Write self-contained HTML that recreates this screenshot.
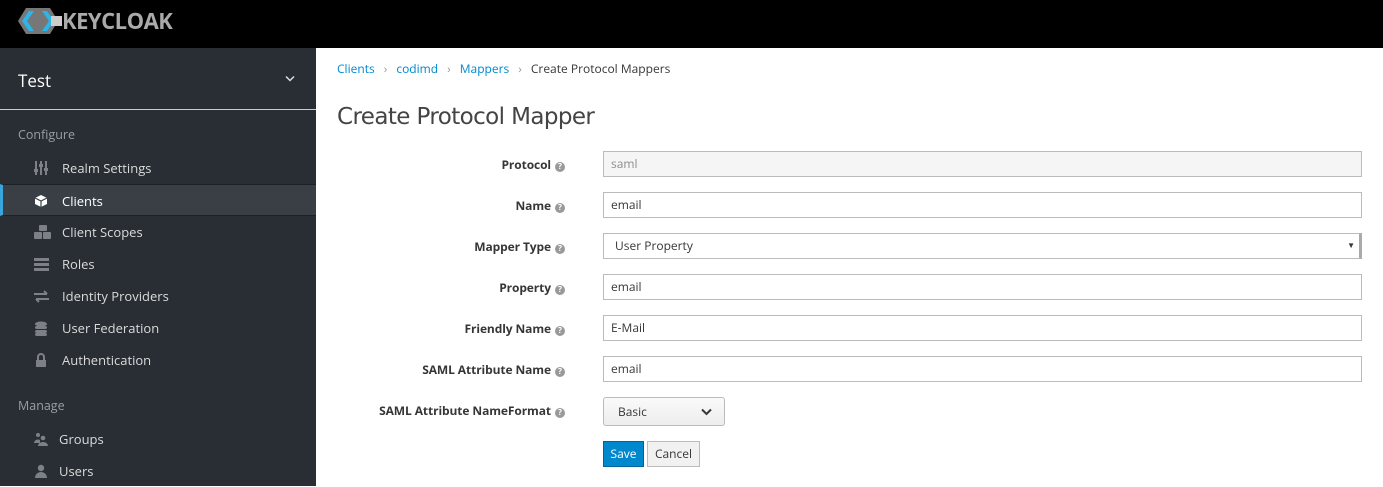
<!DOCTYPE html>
<html><head><style>
*{box-sizing:border-box;margin:0;padding:0}
body{width:1383px;height:486px;overflow:hidden;font-family:"Open Sans","Liberation Sans",sans-serif;font-size:12px;background:#fff;position:relative}
.top{position:absolute;left:0;top:0;width:1383px;height:48px;background:#000}
.logo{position:absolute;left:18px;top:6px;color:#aaa;font-weight:bold;font-size:22px;letter-spacing:-0.5px}
.side{position:absolute;left:0;top:48px;width:316px;height:438px;background:#292e34}
.realm{position:absolute;left:18px;top:21px;color:#fff;font-size:17px}
.chev{position:absolute;left:285px;top:27px}
.sep{position:absolute;left:0;top:61px;width:316px;height:1px;background:#ccc}
.sec{position:absolute;left:18px;color:#9a9da0;font-size:12.5px}
.item{position:absolute;left:0;width:316px;height:32px;color:#dadada;font-size:13px;line-height:32px;padding-left:62px}
.item.act{background:#393f44;border-left:3px solid #39a5dc;padding-left:59px;color:#fff;border-top:1px solid #1d2125;border-bottom:1px solid #1d2125}
.item svg{position:absolute;left:34px;top:9px}
.act svg{left:31px}
.bc{position:absolute;left:337px;top:60px;font-size:12px;color:#363636}
.bc a{color:#0088ce;text-decoration:none}
.bc span.s{color:#999;margin:0 9px}
h1{position:absolute;left:337px;top:104px;font-weight:normal;font-size:23px;color:#444;font-family:"DejaVu Sans","Liberation Sans",sans-serif;letter-spacing:-0.6px}
.lbl{position:absolute;right:818px;font-weight:bold;color:#363636;font-size:12px;white-space:nowrap;letter-spacing:-0.1px}
.lbl i{display:inline-block;width:10px;height:10px;border-radius:50%;background:#999;margin-left:4px;vertical-align:0px;font-style:normal;color:#fff;font-size:8px;line-height:10px;text-align:center}
.inp{position:absolute;left:603px;width:759px;height:26px;border:1px solid #bbb;padding-left:7px;line-height:24px;color:#363636}
.btn{position:absolute;height:26px;line-height:24px;text-align:center;font-size:12px}
</style></head><body>
<div class="top"><div class="logo"><svg width="44" height="26" viewBox="0 0 44 26" style="vertical-align:-5px"><polygon points="8,0 32,0 40,13 32,26 8,26 0,13" fill="#777"/><polygon points="4,13 11,3 16,3 9,13 16,23 11,23" fill="#2bb5e8"/><polygon points="24,3 29,3 36,13 29,23 24,23 31,13" fill="#2bb5e8"/><rect x="33" y="8" width="11" height="10" fill="#ccc"/></svg>KEYCLOAK</div></div>
<div class="side">
<div class="realm">Test</div><svg class="chev" width="10" height="7" viewBox="0 0 10 7"><path d="M1 1.5L5 5.5 9 1.5" stroke="#ddd" stroke-width="1.5" fill="none"/></svg>
<div class="sep"></div>
<div class="sec" style="top:78px">Configure</div>
<div class="item" style="top:104px"><svg width="14" height="14"><g stroke="#7d8187" stroke-width="2"><path d="M2 0v14M7 0v14M12 0v14"/></g><g fill="#7d8187"><rect x="0" y="8" width="4" height="3"/><rect x="5" y="3" width="4" height="3"/><rect x="10" y="7" width="4" height="3"/></g></svg>Realm Settings</div>
<div class="item act" style="top:136px"><svg width="14" height="14"><polygon points="7,1 13,4 13,10 7,13 1,10 1,4" fill="#fff"/><path d="M1 4L7 7 13 4M7 7v6" stroke="#393f44" stroke-width="1.2" fill="none"/></svg>Clients</div>
<div class="item" style="top:168px"><svg width="18" height="14"><g fill="#7d8187"><rect x="5" y="0" width="8" height="6" rx="1"/><rect x="0" y="7" width="8" height="7" rx="1"/><rect x="9" y="7" width="8" height="7" rx="1"/></g></svg>Client Scopes</div>
<div class="item" style="top:200px"><svg width="15" height="14"><g fill="#7d8187"><rect y="1" width="15" height="3"/><rect y="6" width="15" height="3"/><rect y="11" width="15" height="3"/></g></svg>Roles</div>
<div class="item" style="top:232px"><svg width="15" height="14"><g stroke="#7d8187" stroke-width="2" fill="none"><path d="M0 5h13M10 2l3 3M15 10H2M5 13l-3-3"/></g></svg>Identity Providers</div>
<div class="item" style="top:264px"><svg width="14" height="15"><g fill="#7d8187"><ellipse cx="7" cy="3" rx="6" ry="2.5"/><rect x="1" y="5" width="12" height="3" rx="2"/><rect x="1" y="9" width="12" height="3" rx="2"/><rect x="1" y="12" width="12" height="3" rx="2"/></g></svg>User Federation</div>
<div class="item" style="top:296px"><svg width="14" height="14"><path d="M4 7V4a3 3 0 0 1 6 0v3" stroke="#7d8187" stroke-width="2" fill="none"/><rect x="2" y="7" width="10" height="7" fill="#7d8187"/></svg>Authentication</div>
<div class="sec" style="top:349px">Manage</div>
<div class="item" style="top:375px;padding-left:59px"><svg width="14" height="14"><g fill="#7d8187"><circle cx="4" cy="3" r="2"/><circle cx="9" cy="6" r="2.3"/><path d="M0 11a4 4 0 0 1 6-3v3z"/><path d="M4 14a5 4 0 0 1 10 0z"/></g></svg>Groups</div>
<div class="item" style="top:407px;padding-left:59px"><svg width="14" height="14"><g fill="#7d8187"><circle cx="7" cy="4" r="3.2"/><path d="M1 14a6 6 0 0 1 12 0z"/></g></svg>Users</div>
</div>
<div class="bc"><a>Clients</a><span class="s">›</span><a>codimd</a><span class="s">›</span><a>Mappers</a><span class="s">›</span>Create Protocol Mappers</div>
<h1>Create Protocol Mapper</h1>
<div class="lbl" style="top:156px">Protocol<i>?</i></div><div class="inp" style="top:151px;background:#f5f5f5;color:#8b8d8f">saml</div>
<div class="lbl" style="top:197px">Name<i>?</i></div><div class="inp" style="top:192px">email</div>
<div class="lbl" style="top:238px">Mapper Type<i>?</i></div><div class="inp" style="top:233px;padding-left:11px;border-right:3px solid #aaa">User Property<span style="position:absolute;right:4px;top:0;font-size:8px">▼</span></div>
<div class="lbl" style="top:279px">Property<i>?</i></div><div class="inp" style="top:274px">email</div>
<div class="lbl" style="top:320px">Friendly Name<i>?</i></div><div class="inp" style="top:315px">E-Mail</div>
<div class="lbl" style="top:361px">SAML Attribute Name<i>?</i></div><div class="inp" style="top:356px">email</div>
<div class="lbl" style="top:402px">SAML Attribute NameFormat<i>?</i></div>
<div class="btn" style="left:603px;top:397px;width:122px;height:29px;line-height:27px;border:1px solid #bbb;border-radius:3px;background:linear-gradient(#fafafa,#ededed);text-align:left;padding-left:14px;color:#363636">Basic<svg style="position:absolute;right:12px;top:10px" width="11" height="8" viewBox="0 0 11 8"><path d="M1 1.5L5.5 6 10 1.5" stroke="#363636" stroke-width="2" fill="none"/></svg></div>
<div class="btn" style="left:603px;top:441px;width:41px;background:#0088ce;border:1px solid #00659c;color:#fff">Save</div>
<div class="btn" style="left:647px;top:441px;width:53px;background:#f1f1f1;border:1px solid #bbb;color:#363636">Cancel</div>
</body></html>
